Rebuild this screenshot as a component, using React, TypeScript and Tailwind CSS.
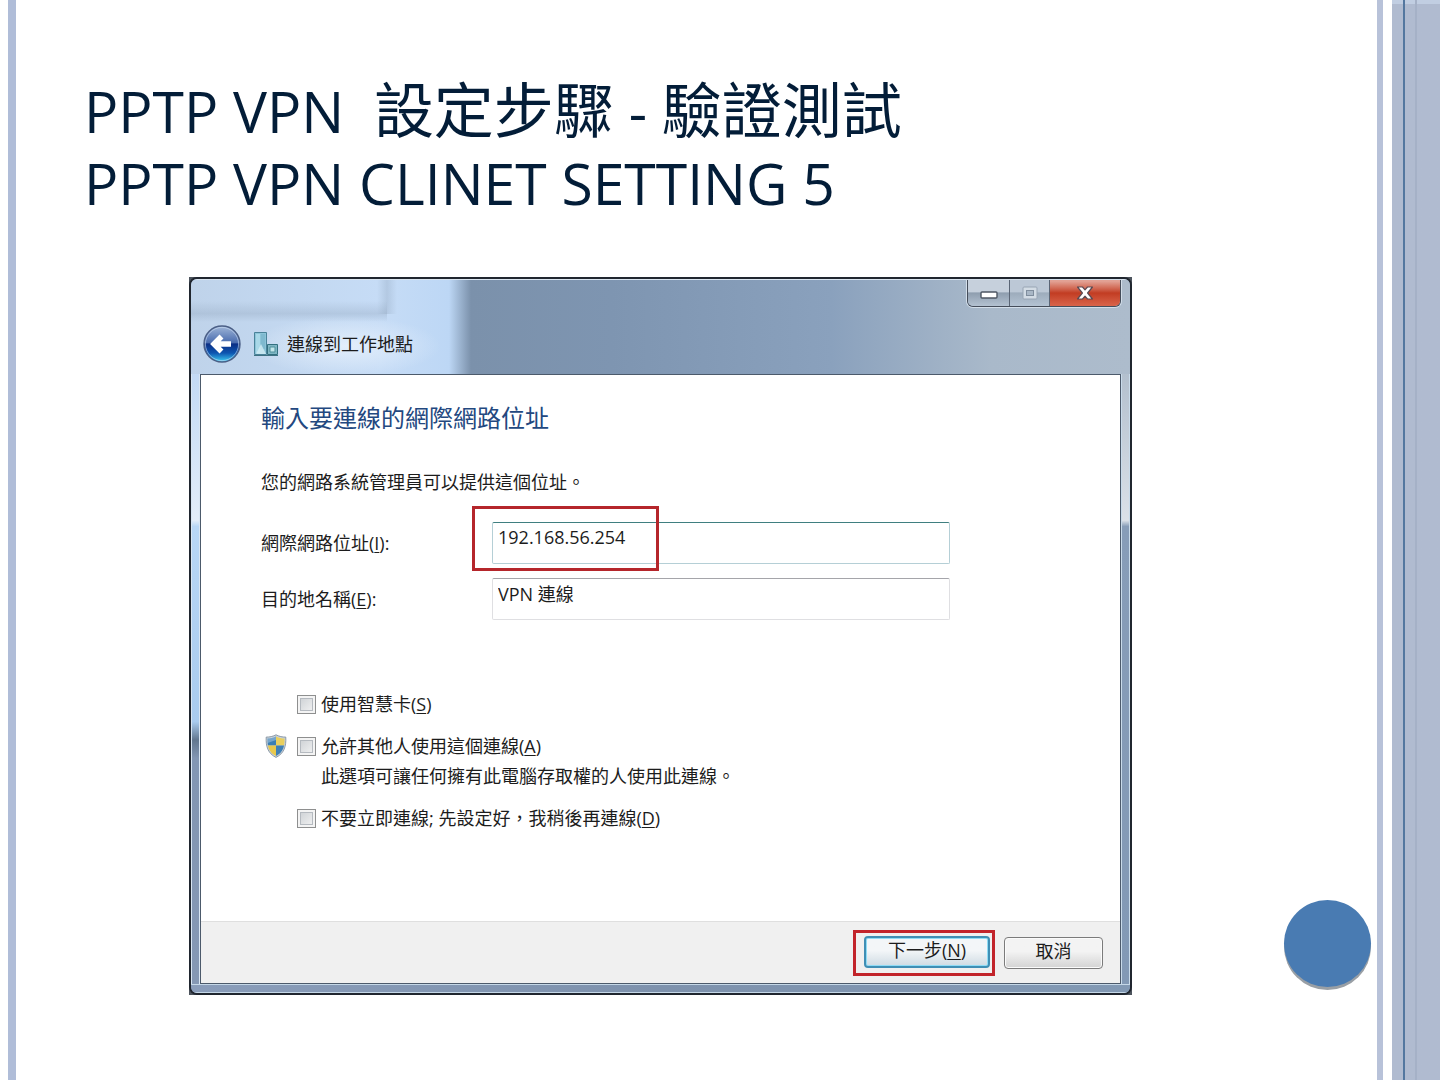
import { useState } from "react";
import type { ReactNode } from "react";

type Option = {
  id: string;
  label: string;
  accessKey: string;
  shield?: boolean;
  note?: string;
};

const options: Option[] = [
  { id: "smartcard", label: "使用智慧卡", accessKey: "S" },
  {
    id: "share",
    label: "允許其他人使用這個連線",
    accessKey: "A",
    shield: true,
    note: "此選項可讓任何擁有此電腦存取權的人使用此連線。",
  },
  { id: "later", label: "不要立即連線; 先設定好，我稍後再連線", accessKey: "D" },
];

function BackIcon() {
  return (
    <svg viewBox="0 0 38 38" className="h-[38px] w-[38px]" aria-hidden="true">
      <defs>
        <linearGradient id="backTop" x1="0" y1="0" x2="0" y2="1">
          <stop offset="0" stopColor="#9fb6d8" />
          <stop offset="0.46" stopColor="#4a6cae" />
          <stop offset="0.5" stopColor="#0b2f85" />
          <stop offset="0.75" stopColor="#0d55b0" />
          <stop offset="1" stopColor="#3fd0f4" />
        </linearGradient>
      </defs>
      <circle cx="19" cy="19" r="18" fill="url(#backTop)" stroke="#4b5f86" strokeWidth="1.4" />
      <circle cx="19" cy="19" r="16.6" fill="none" stroke="#c9dcf2" strokeOpacity="0.6" />
      <path
        d="M18.500 11.500 11 19l7.500 7.500M12 19h16"
        fill="none"
        stroke="#fff"
        strokeWidth="5.5"
        strokeLinejoin="miter"
      />
    </svg>
  );
}

function WorkplaceIcon() {
  return (
    <svg viewBox="0 0 26 26" className="h-[26px] w-[26px]" aria-hidden="true">
      <path d="M1.500 1.500h12v22h-12z" fill="#8cc4d8" stroke="#4a8299" />
      <path d="M3 3h4v19H3z" fill="#a9d8e8" />
      <path d="M8 3h4v15H8z" fill="#7fb9cf" />
      <path d="m3 23 5-10 5 10z" fill="#d3eef5" fillOpacity="0.8" />
      <path d="M14.500 13.500h10v10h-10z" fill="#7fb6c4" stroke="#33707f" />
      <path d="M17 16h5v5h-5z" fill="#c3e6ea" stroke="#4e8f9b" />
      <path d="M1 24.500h24" stroke="#3f7182" />
    </svg>
  );
}

function ShieldIcon() {
  return (
    <svg viewBox="0 0 22 24" className="h-6 w-[22px]" aria-hidden="true">
      <defs>
        <clipPath id="shieldClip">
          <path d="M11 2.500c3 1.500 5.500 2 8.500 2 .3 8-1.500 14-8.500 17.500C4 18.500 2.200 12.500 2.500 4.500c3 0 5.500-.5 8.500-2Z" />
        </clipPath>
      </defs>
      <path
        d="M11 .8c3.300 1.700 6.300 2.300 9.800 2.300.5 9.500-1.800 16.400-9.800 20.300C3 19.500.7 12.600 1.200 3.100 4.700 3.100 7.700 2.500 11 .8Z"
        fill="#c9d2da"
        stroke="#8593a1"
        strokeWidth="0.9"
      />
      <g clipPath="url(#shieldClip)">
        <path d="M0 0h11v11.500H0z" fill="#3b7fb5" />
        <path d="M11 0h11v11.500H11z" fill="#e9cf5d" />
        <path d="M0 11.500h11V24H0z" fill="#e8c84c" />
        <path d="M11 11.500h11V24H11z" fill="#3f7fb4" />
        <path d="M0 0h11v6L0 10z" fill="#fff" fillOpacity="0.3" />
      </g>
    </svg>
  );
}

function AccessKey({ children }: { children: ReactNode }) {
  return (
    <>
      (<u className="underline-offset-2">{children}</u>)
    </>
  );
}

function WindowControls() {
  return (
    <div className="flex h-[27px] overflow-hidden rounded-b-md border border-t-0 border-[#454d5a] shadow-[0_0_0_1px_#d3dee9]">
      <button
        aria-label="最小化"
        className="flex w-[42px] items-center justify-center border-r border-[#5a6575] bg-linear-to-b from-[#c6d0dc] from-45% via-[#8f9eaf] via-50% to-[#b4c2d1]"
      >
        <svg viewBox="0 0 18 8" className="mt-1 h-2 w-[18px]" aria-hidden="true">
          <rect x="1" y="1" width="16" height="6" rx="1" fill="#fff" stroke="#4d5663" strokeWidth="1.4" />
        </svg>
      </button>
      <button
        aria-label="最大化"
        className="flex w-10 items-center justify-center border-r border-[#5a6575] bg-linear-to-b from-[#bcc8d6] from-45% via-[#9dacbc] via-50% to-[#b4c3d3]"
      >
        <svg viewBox="0 0 16 14" className="h-[14px] w-4" aria-hidden="true">
          <rect x="1" y="1" width="14" height="12" rx="1" fill="#d3dce5" stroke="#98a5b4" />
          <rect x="4.500" y="4.500" width="7" height="5" fill="#a9b7c6" stroke="#7f8d9d" />
        </svg>
      </button>
      <button
        aria-label="關閉"
        className="flex w-[70px] items-center justify-center bg-linear-to-b from-[#e2a194] from-5% via-[#c23c22] via-50% to-[#d9644a]"
      >
        <svg viewBox="0 0 18 16" className="h-4 w-[18px]" aria-hidden="true">
          <path
            d="M1.500 2h5L9 4.800 11.500 2h5l-4.900 6 4.900 6h-5L9 11.200 6.500 14h-5l4.900-6Z"
            fill="#fff"
            stroke="#5b4a52"
            strokeWidth="1.2"
            strokeLinejoin="round"
          />
        </svg>
      </button>
    </div>
  );
}

function VpnDialog() {
  const [address, setAddress] = useState("192.168.56.254");
  const [name, setName] = useState("VPN 連線");

  return (
    <section className="w-full max-w-[943px] bg-[#4c535c] text-lg leading-6 text-[#1c1c1c]">
      <div className="overflow-hidden rounded-lg border-2 border-[#20262f] bg-[#8397b2]">
        {/* Title bar, with the blurred window behind it showing through the glass */}
        <header className="h-[95px] border-t border-[#d9e4ef] bg-[linear-gradient(180deg,transparent_50%,#8fa3bb55_80%,transparent_100%),linear-gradient(90deg,transparent_0px,#8fa3bb55_10px,transparent_20px),radial-gradient(closest-side,#eaf3fdcc,transparent),linear-gradient(90deg,#bfd3ea_0px,#c6dcf6_190px,#bdd7f5_258px,#7b91ab_280px,#7e95b1_420px,#8aa1bd_640px,#a9b9ca_800px,#adbccc_100%)] bg-[size:196px_42px,20px_34px,190px_60px,100%_100%] bg-[position:0_0,186px_0,60px_36px,0_0] bg-no-repeat pr-[9px] pl-3">
          <div className="flex justify-end">
            <WindowControls />
          </div>
          <div className="mt-[18px] flex items-center">
            <button aria-label="上一步" className="rounded-full">
              <BackIcon />
            </button>
            <span className="ml-3">
              <WorkplaceIcon />
            </span>
            <h2 className="ml-2">連線到工作地點</h2>
          </div>
        </header>

        <div className="flex">
          <div className="w-[9px] border-x border-[#d9e6f3] bg-[linear-gradient(180deg,#c3daf5_0%,#e3edf9_24%,#b9d7f6_25%,#a9cbee_57%,#62778f_60%,#8296b3_63%,#8598b4_100%)]" />

          <div className="min-w-0 flex-1 border border-[#4c5a6b] bg-white">
            <div className="px-[60px] pt-[27px]">
              <h3 className="text-2xl leading-8 text-[#23487f]">輸入要連線的網際網路位址</h3>
              <p className="mt-9">您的網路系統管理員可以提供這個位址。</p>

              <div className="mt-7 grid grid-cols-[231px_minmax(0,458px)] gap-y-[14px]">
                <label htmlFor="address" className="self-center">
                  網際網路位址
                  <AccessKey>I</AccessKey>:
                </label>
                <div className="relative">
                  <input
                    id="address"
                    value={address}
                    onChange={(e) => setAddress(e.target.value)}
                    className="block h-[42px] w-full rounded-xs border border-[#b5cfd6] border-t-[#3f7f80] bg-white px-[5px] pb-3 outline-none"
                  />
                  <div className="pointer-events-none absolute -top-4 -left-5 h-[65px] w-[187px] border-3 border-[#b5262b]" />
                </div>
                <label htmlFor="name" className="self-center">
                  目的地名稱
                  <AccessKey>E</AccessKey>:
                </label>
                <input
                  id="name"
                  value={name}
                  onChange={(e) => setName(e.target.value)}
                  className="block h-[42px] w-full rounded-xs border border-[#dfdfe2] border-t-[#a5a5aa] bg-white px-[5px] pb-3 outline-none"
                />
              </div>

              <div className="mt-[72px] mb-[91px] flex flex-col gap-[18px]">
                {options.map((option) => (
                  <div key={option.id} className="grid grid-cols-[36px_24px_1fr] items-center gap-y-[6px]">
                    <span className="pl-1">{option.shield && <ShieldIcon />}</span>
                    <input
                      id={option.id}
                      type="checkbox"
                      className="h-[19px] w-[19px] appearance-none border border-[#8e8f8f] bg-linear-to-br from-[#c9cdd1] to-[#f6f6f6] shadow-[inset_0_0_0_2px_#f4f4f4,inset_0_0_0_3px_#b5bac0] checked:bg-[#4b7db5]"
                    />
                    <label htmlFor={option.id}>
                      {option.label}
                      <AccessKey>{option.accessKey}</AccessKey>
                    </label>
                    {option.note && <p className="col-start-3">{option.note}</p>}
                  </div>
                ))}
              </div>
            </div>

            <footer className="flex h-[62px] items-center justify-end gap-[9px] border-t border-[#dfdfdf] bg-[#f0f0f0] pr-[17px]">
              <div className="border-3 border-[#c2242b] pt-[3px] pr-[2px] pb-[5px] pl-2">
                <button className="block h-8 w-[126px] rounded-sm border-2 border-[#3f8fb5] bg-linear-to-b from-[#f3f6f8] from-45% to-[#cfdbe3] pb-1 shadow-[inset_0_0_0_1px_#8fdcf5]">
                  下一步
                  <AccessKey>N</AccessKey>
                </button>
              </div>
              <button className="h-8 w-[99px] rounded-sm border border-[#7b7b7b] bg-linear-to-b from-[#f3f3f3] from-45% to-[#d3d3d3] pb-1 shadow-[inset_0_0_0_1px_#fbfbfb]">
                取消
              </button>
            </footer>
          </div>

          <div className="w-[9px] border-x border-[#c9dbea] bg-[linear-gradient(180deg,#b3c0ce_0%,#dbe1e8_24%,#879db8_25%,#8299b5_100%)]" />
        </div>

        <div className="h-[9px] border-y border-[#c5d8e8] bg-linear-to-r from-[#8a9dba] via-[#7e92ad] to-[#8299b4]" />
      </div>
    </section>
  );
}

export default function App() {
  return (
    <div className="flex min-h-screen bg-white pl-2 font-['Open_Sans','Noto_Sans_CJK_TC',sans-serif]">
      <div className="w-2 shrink-0 bg-[#b0bdd8]" />

      <main className="relative min-w-0 flex-1 pt-[75px] pr-[66px] pb-20 pl-[68px]">
        <h1 className="text-[57px] leading-[72px] text-[#031d38]">
          PPTP VPN&nbsp; <span className="text-[60px] leading-none">設定步驟</span> -{" "}
          <span className="text-[60px] leading-none">驗證測試</span>
          <br />
          PPTP VPN CLINET SETTING 5
        </h1>
        <div className="mt-[58px] pl-[105px]">
          <VpnDialog />
        </div>
        <div className="absolute right-[6px] bottom-[93px] h-[87px] w-[87px] rounded-full bg-[#497bb2] shadow-[0_3px_0_#999fa5]" />
      </main>

      {/* Decorative stripes on the right edge */}
      <div className="w-[6px] shrink-0 bg-[#b8c2d9]" />
      <div className="ml-[9px] flex w-12 shrink-0 bg-linear-to-b from-[#c1cee2] from-[4px] to-[#b0bbd0] to-[4px]">
        <div className="ml-[11px] w-[2px] bg-[#54779f]" />
        <div className="ml-[10px] w-[2px] bg-[#a5b1c7]" />
      </div>
    </div>
  );
}
